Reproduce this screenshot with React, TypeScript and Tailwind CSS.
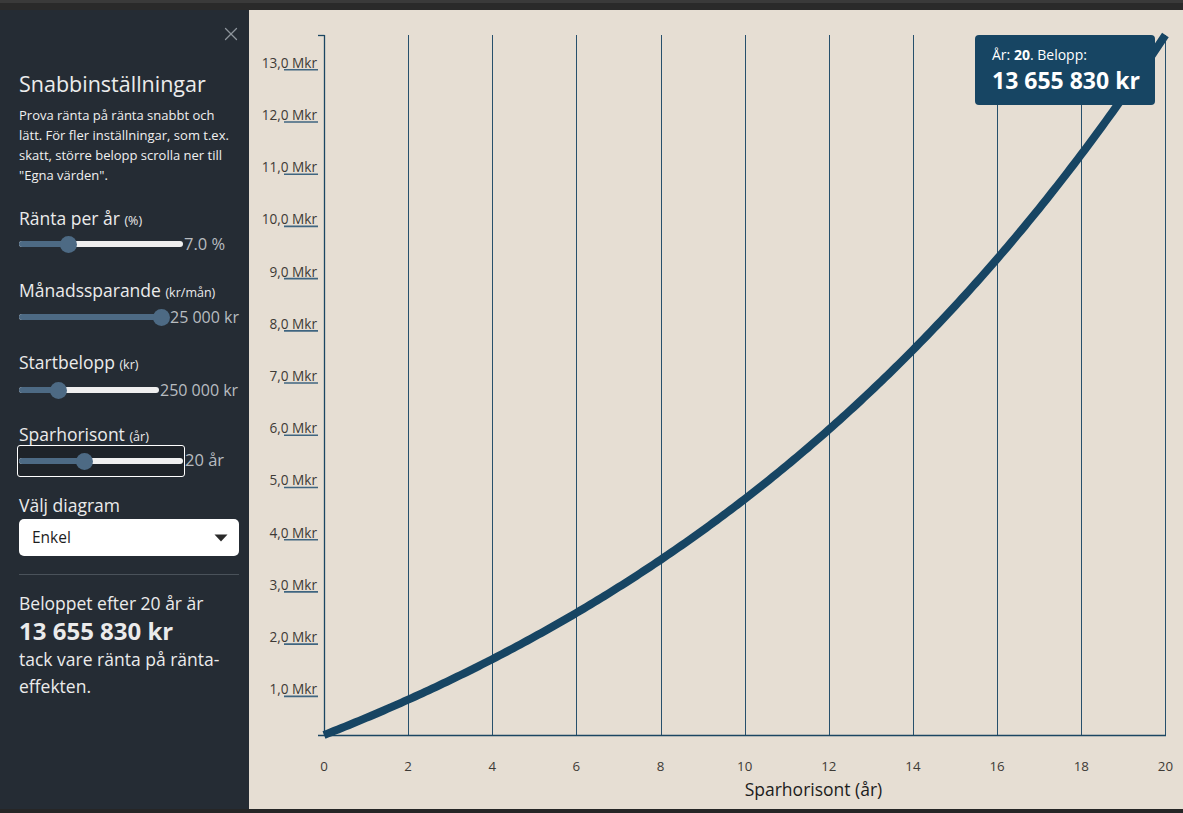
import React from "react";
import { X } from "lucide-react";

const FONT = "font-['Open_Sans','Noto_Sans',sans-serif]";

function Slider({
  frac,
  width,
  focused,
}: {
  frac: number;
  width: string;
  focused?: boolean;
}) {
  const inner = (
    <div className={`relative h-[20px] ${width}`}>
      <div className="absolute left-0 right-0 top-[7px] h-[6px] rounded-full bg-[#efefef] overflow-hidden">
        <div
          className="h-full bg-[#4d6a84]"
          style={{ width: `calc(8px + ${frac} * (100% - 16px))` }}
        />
      </div>
      <div
        className="absolute top-[2px] h-[17px] w-[17px] rounded-full bg-[#4d6a84]"
        style={{ left: `calc(${frac} * (100% - 16px) - 0.5px)` }}
      />
    </div>
  );
  if (focused) {
    return (
      <div className="shrink-0 -ml-[2px] rounded-[3px] border border-white bg-[#1e2329] px-[1px] py-[5px]">
        {inner}
      </div>
    );
  }
  return inner;
}

function Label({ main, unit, mt }: { main: string; unit: string; mt: string }) {
  return (
    <div className={`${mt} h-[24px] leading-[24px] text-[17.5px] text-[#ebebeb] whitespace-nowrap`}>
      {main} <span className="text-[12.5px]">{unit}</span>
    </div>
  );
}

function Chart() {
  const W = 934;
  const H = 799;
  const x0 = 75;
  const perYear = 42.07;
  const yBottom = 725;
  const yTop = 25;
  const X = (yr: number) => x0 + yr * perYear;
  const minV = 250000;
  const maxV = 13655830;
  const Y = (v: number) => yBottom - ((v - minV) / (maxV - minV)) * (yBottom - yTop);
  const g = Math.pow(1.07, 1 / 12);
  const pts: string[] = [];
  for (let m = 0; m <= 240; m++) {
    const gm = Math.pow(g, m);
    const v = 250000 * gm + (25000 * (gm - 1)) / (g - 1);
    pts.push(`${X(m / 12).toFixed(2)},${Y(v).toFixed(2)}`);
  }
  const years = [2, 4, 6, 8, 10, 12, 14, 16, 18, 20];
  const labels = [13, 12, 11, 10, 9, 8, 7, 6, 5, 4, 3, 2, 1];
  return (
    <svg width={W} height={H} className="block" style={{ fontFamily: "'Open Sans', 'Noto Sans', sans-serif" }}>
      {years.map((yr) => {
        const x = Math.round(X(yr)) + 0.5;
        return (
          <line key={yr} x1={x} x2={x} y1={yTop} y2={yBottom} stroke="#27506c" strokeWidth={1} />
        );
      })}
      <line x1={x0 + 0.5} x2={x0 + 0.5} y1={yTop} y2={yBottom} stroke="#1b4662" strokeWidth={1.3} />
      <line x1={69} x2={x0 + 0.5} y1={yTop + 0.5} y2={yTop + 0.5} stroke="#1b4662" strokeWidth={1.3} />
      <line x1={69} x2={917} y1={yBottom + 0.5} y2={yBottom + 0.5} stroke="#1b4662" strokeWidth={1.3} />
      {labels.map((v) => {
        const ty = Y(v * 1000000);
        return (
          <g key={v}>
            <text
              x={68}
              y={ty - 7}
              textAnchor="end"
              dominantBaseline="central"
              fontSize={13.6}
              fill="#3d3a36"
            >
              {`${v},0 Mkr`}
            </text>
            <line x1={35} x2={69} y1={ty + 0.5} y2={ty + 0.5} stroke="#3f6580" strokeWidth={1.6} />
          </g>
        );
      })}
      {[0, ...years].map((yr) => (
        <text
          key={yr}
          x={X(yr)}
          y={756}
          textAnchor="middle"
          dominantBaseline="central"
          fontSize={13.3}
          fill="#3d3a36"
        >
          {yr}
        </text>
      ))}
      <text x={X(10)} y={779} dominantBaseline="central" fontSize={17.5} fill="#1c1c1c">
        Sparhorisont (år)
      </text>
      <polyline points={pts.join(" ")} fill="none" stroke="#174563" strokeWidth={8} />
    </svg>
  );
}

export default function App() {
  return (
    <div className={`flex h-[813px] w-full flex-col overflow-hidden bg-[#262626] ${FONT}`}>
      <div className="h-[10px] shrink-0 bg-[#2a2a2a] border-t-[3px] border-[#3a3a3a]" />
      <div className="flex h-[799px] shrink-0">
        <aside className="flex w-[249px] shrink-0 flex-col bg-[#252c34] pl-[19px] pr-[10px]">
          <div className="mt-[13px] flex h-[22px] justify-end">
            <X size={22} strokeWidth={1.4} className="text-[#8d949b] -mr-[3px]" />
          </div>
          <h1 className="mt-[27px] h-[24px] text-[21.5px] leading-[24px] text-[#ececec] font-normal whitespace-nowrap">
            Snabbinställningar
          </h1>
          <p className="mt-[9px] text-[13px] leading-[20px] text-[#f0f0f0]">
            Prova ränta på ränta snabbt och lätt. För fler inställningar, som t.ex. skatt, större belopp scrolla ner till "Egna värden".
          </p>

          <Label main="Ränta per år" unit="(%)" mt="mt-[21px]" />
          <div className="mt-[4px] flex h-[20px] items-center">
            <Slider frac={0.28} width="w-[164px]" />
            <span className="ml-[1px] whitespace-nowrap text-[16.5px] text-[#b8bcc0]">7.0 %</span>
          </div>

          <Label main="Månadssparande" unit="(kr/mån)" mt="mt-[24px]" />
          <div className="mt-[5px] flex h-[20px] items-center">
            <Slider frac={1} width="w-[150px]" />
            <span className="ml-[1px] whitespace-nowrap text-[16px] text-[#b8bcc0]">25 000 kr</span>
          </div>

          <Label main="Startbelopp" unit="(kr)" mt="mt-[23px]" />
          <div className="mt-[6px] flex h-[20px] items-center">
            <Slider frac={0.25} width="w-[140px]" />
            <span className="ml-[1px] whitespace-nowrap text-[16px] text-[#b8bcc0]">250 000 kr</span>
          </div>

          <Label main="Sparhorisont" unit="(år)" mt="mt-[22px]" />
          <div className="-mt-[1px] flex h-[31px] items-center">
            <Slider frac={0.39} width="w-[164px]" focused />
            <span className="whitespace-nowrap text-[16.5px] text-[#b8bcc0]">20 år</span>
          </div>

          <div className="mt-[17px] h-[24px] text-[17.5px] leading-[24px] text-[#ebebeb]">Välj diagram</div>
          <div className="mt-[2px] flex h-[37px] items-center justify-between rounded-[5px] bg-white pl-[13px] pr-[11px]">
            <span className="text-[15.5px] text-[#1e1e1e]">Enkel</span>
            <svg width="14" height="8" viewBox="0 0 14 8">
              <path d="M0.5 0.5 L13.5 0.5 L7 7.5 Z" fill="#2a2a2a" />
            </svg>
          </div>
          <div className="mt-[18px] h-px bg-[#4a525a]" />
          <div className="mt-[16px] h-[24px] text-[17.5px] leading-[24px] text-[#ebebeb] whitespace-nowrap">
            Beloppet efter 20 år är
          </div>
          <div className="mt-[1px] h-[30px] text-[24px] font-bold leading-[30px] text-[#ebebeb] whitespace-nowrap">13 655 830 kr</div>
          <div className="mt-[0px] text-[17.5px] leading-[27px] text-[#ebebeb]">
            tack vare ränta på ränta-effekten.
          </div>
        </aside>
        <main className="relative flex-1 bg-[#e6ded3]">
          <Chart />
          <div className="absolute left-[726px] top-[25px] flex h-[70px] w-[180px] flex-col rounded-[4px] bg-[#174563] pl-[17px] text-white">
            <div className="mt-[10px] h-[20px] text-[14px] leading-[20px] whitespace-nowrap">
              År: <span className="font-bold">20</span>. Belopp:
            </div>
            <div className="mt-[1px] h-[28px] text-[23px] font-bold leading-[28px] whitespace-nowrap">13 655 830 kr</div>
          </div>
        </main>
      </div>
      <div className="h-[4px] shrink-0 bg-[#262626]" />
    </div>
  );
}
